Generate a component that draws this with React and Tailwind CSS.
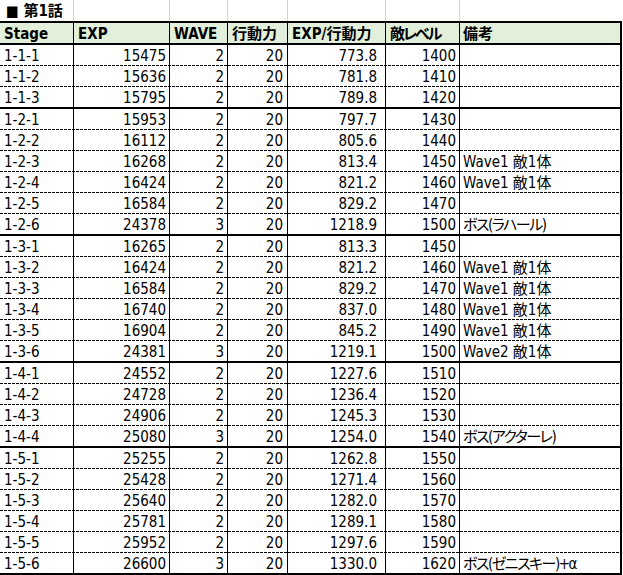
import React from "react";

const groups = [
  [
    ["1-1-1", "15475", "2", "20", "773.8", "1400", ""],
    ["1-1-2", "15636", "2", "20", "781.8", "1410", ""],
    ["1-1-3", "15795", "2", "20", "789.8", "1420", ""],
  ],
  [
    ["1-2-1", "15953", "2", "20", "797.7", "1430", ""],
    ["1-2-2", "16112", "2", "20", "805.6", "1440", ""],
    ["1-2-3", "16268", "2", "20", "813.4", "1450", "Wave1 敵1体"],
    ["1-2-4", "16424", "2", "20", "821.2", "1460", "Wave1 敵1体"],
    ["1-2-5", "16584", "2", "20", "829.2", "1470", ""],
    ["1-2-6", "24378", "3", "20", "1218.9", "1500", "ボス(ラハール)"],
  ],
  [
    ["1-3-1", "16265", "2", "20", "813.3", "1450", ""],
    ["1-3-2", "16424", "2", "20", "821.2", "1460", "Wave1 敵1体"],
    ["1-3-3", "16584", "2", "20", "829.2", "1470", "Wave1 敵1体"],
    ["1-3-4", "16740", "2", "20", "837.0", "1480", "Wave1 敵1体"],
    ["1-3-5", "16904", "2", "20", "845.2", "1490", "Wave1 敵1体"],
    ["1-3-6", "24381", "3", "20", "1219.1", "1500", "Wave2 敵1体"],
  ],
  [
    ["1-4-1", "24552", "2", "20", "1227.6", "1510", ""],
    ["1-4-2", "24728", "2", "20", "1236.4", "1520", ""],
    ["1-4-3", "24906", "2", "20", "1245.3", "1530", ""],
    ["1-4-4", "25080", "3", "20", "1254.0", "1540", "ボス(アクターレ)"],
  ],
  [
    ["1-5-1", "25255", "2", "20", "1262.8", "1550", ""],
    ["1-5-2", "25428", "2", "20", "1271.4", "1560", ""],
    ["1-5-3", "25640", "2", "20", "1282.0", "1570", ""],
    ["1-5-4", "25781", "2", "20", "1289.1", "1580", ""],
    ["1-5-5", "25952", "2", "20", "1297.6", "1590", ""],
    ["1-5-6", "26600", "3", "20", "1330.0", "1620", "ボス(ゼニスキー)+α"],
  ],
];

const headers = ["Stage", "EXP", "WAVE", "行動力", "EXP/行動力", "敵レベル", "備考"];

const colW = [
  "w-[74px]",
  "w-[96px]",
  "w-[58px]",
  "w-[60px]",
  "w-[98px]",
  "w-[74px]",
  "w-[160px]",
];

const dataAlign = [
  "justify-start pl-[4px]",
  "justify-end pr-[3px]",
  "justify-end pr-[3px]",
  "justify-end pr-[4px]",
  "justify-end pr-[8px]",
  "justify-end pr-[3px]",
  "justify-start pl-[3px]",
];

const borderR = [
  "border-r border-black",
  "border-r border-black",
  "border-r border-black",
  "border-r border-black",
  "border-r border-black",
  "border-r border-black",
  "",
];

function DataRow({ row, last }) {
  return (
    <div
      className={
        last
          ? "flex h-[20px]"
          : "flex h-[21px] bg-[repeating-linear-gradient(to_right,#000_0_3px,transparent_3px_4px)] bg-no-repeat bg-bottom bg-[length:100%_1px]"
      }
    >
      {row.map((v, i) => (
        <div
          key={i}
          className={`${colW[i]} ${borderR[i]} ${dataAlign[i]} ${last ? "" : "pb-px"} ${v.startsWith("ボス") ? "tracking-[-1.5px]" : ""} flex items-end h-full shrink-0 whitespace-nowrap leading-[18px]`}
        >
          {v}
        </div>
      ))}
    </div>
  );
}

export default function App() {
  return (
    <div
      className="w-[623px] h-[575px] bg-white text-black text-[15px] overflow-hidden [font-feature-settings:'palt']"
      style={{ fontFamily: '"DejaVu Sans Condensed", "Noto Sans CJK JP", sans-serif' }}
    >
      {/* title row */}
      <div className="flex h-[21px] w-[622px]">
        {colW.map((w, i) => (
          <div
            key={i}
            className={`${w} ${i < 6 ? "border-r border-[#d4d4d4]" : ""} shrink-0 h-full flex items-end leading-[18px] whitespace-nowrap font-bold ${i === 0 ? "pl-[6px] pb-[1px]" : ""}`}
          >
            {i === 0 ? "■ 第1話" : ""}
          </div>
        ))}
      </div>
      <div className="w-[622px] border-t-2 border-r-2 border-black">
        {/* header */}
        <div className="flex h-[20px] bg-[#e2efda] font-bold">
          {headers.map((h, i) => (
            <div
              key={i}
              className={`${colW[i]} ${borderR[i]} ${i === 5 ? "tracking-[-2px]" : ""} shrink-0 h-full flex items-end leading-[18px] whitespace-nowrap ${i === 6 ? "pl-[3px]" : "pl-[4px]"}`}
            >
              {h}
            </div>
          ))}
        </div>
        <div className="h-[2px] bg-black" />
        {groups.map((g, gi) => (
          <div key={gi}>
            {g.map((row, ri) => (
              <DataRow key={ri} row={row} last={ri === g.length - 1} />
            ))}
            <div className="h-[2px] bg-black" />
          </div>
        ))}
      </div>
    </div>
  );
}
